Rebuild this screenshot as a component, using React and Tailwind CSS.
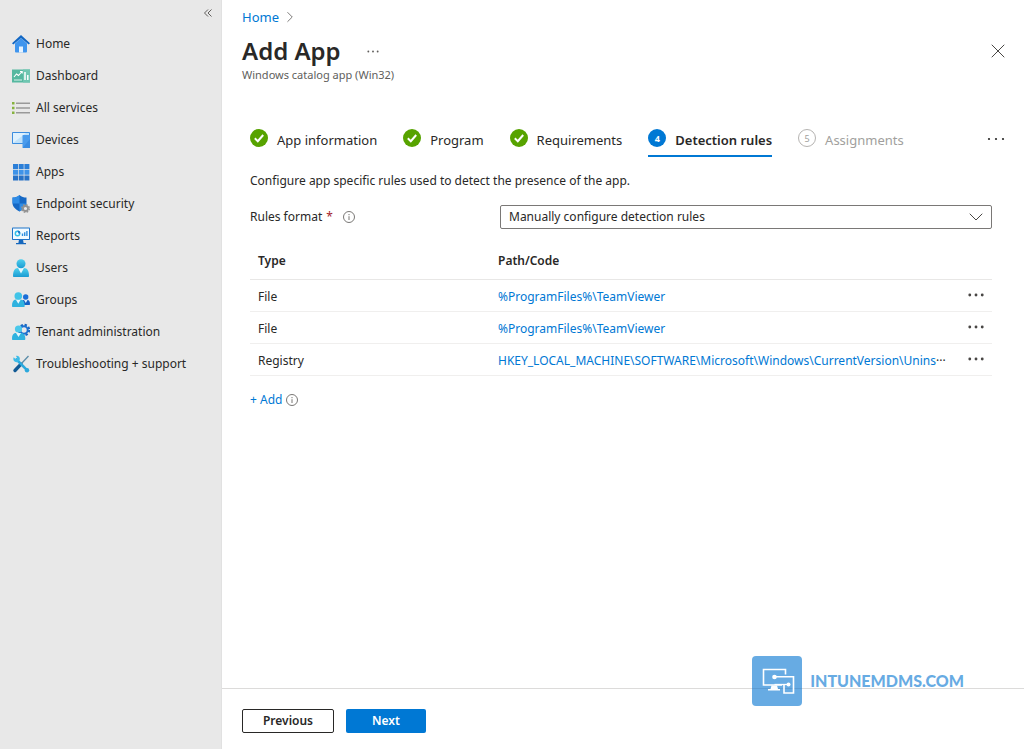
import React, { useState } from 'react';
import { ChevronDown, ChevronRight, X } from 'lucide-react';

const HomeIcon = () => (
  <svg viewBox="0 0 18 18" className="h-[18px] w-[18px]" aria-hidden="true">
    <path d="M3 8.500 9 3l6 5.500V16.500a1 1 0 0 1-1 1H4a1 1 0 0 1-1-1z" fill="#3f95ee" />
    <path d="M7 11.500h4v6H7z" fill="#e6f3ff" />
    <path d="M9 0 0 8.200l1.300 1.400L9 3l7.700 6.600L18 8.200z" fill="#1267c4" />
  </svg>
);

const DashboardIcon = () => (
  <svg viewBox="0 0 18 18" className="h-[18px] w-[18px]" aria-hidden="true">
    <rect x="0" y="2.500" width="18" height="13" fill="#56b8a0" />
    <rect x="11" y="2.500" width="7" height="13" fill="#6fc6b1" />
    <path d="M2 10l2.500-3 2 1.500L10 4.500M8 4.500h2.200v2" fill="none" stroke="#fff" strokeWidth="1.100" />
    <path d="M2 13h8" stroke="#d9f1eb" strokeWidth="1" />
    <path d="M13 5v8M15.800 8v5" stroke="#fff" strokeWidth="1.500" />
  </svg>
);

const ServicesIcon = () => (
  <svg viewBox="0 0 18 18" className="h-[18px] w-[18px]" aria-hidden="true">
    <path d="M0 3h2.500v2.500H0zM0 7.800h2.500v2.500H0zM0 12.500h2.500V15H0z" fill="#86b23f" />
    <path d="M4 4.300h14M4 9h14M4 13.800h14" stroke="#999" strokeWidth="1.500" />
  </svg>
);

const DevicesIcon = () => (
  <svg viewBox="0 0 18 18" className="h-[18px] w-[18px]" aria-hidden="true">
    <rect x="0" y="1" width="18" height="12" rx="0.800" fill="#3c8ddf" />
    <rect x="1" y="2" width="16" height="10" fill="#bfe1fa" />
    <path d="M1 12V2h13z" fill="#dff1fd" />
    <rect x="10.500" y="4" width="7.500" height="13" rx="0.800" fill="#4a9bec" />
    <path d="M10.500 17h7.500V8z" fill="#3a8ce2" />
  </svg>
);

const AppsIcon = () => (
  <svg viewBox="0 0 18 18" className="h-[18px] w-[18px]" aria-hidden="true">
    <path d="M1 1h5v5H1zM6.700 1h5v5h-5zM12.400 1h5v5h-5z" fill="#2b7fd8" />
    <path d="M1 6.700h5v5H1zM6.700 6.700h5v5h-5zM12.400 6.700h5v5h-5z" fill="#3f93e8" />
    <path d="M1 12.400h5v5H1zM6.700 12.400h5v5h-5zM12.400 12.400h5v5h-5z" fill="#2872c6" />
  </svg>
);

const SecurityIcon = () => (
  <svg viewBox="0 0 18 18" className="h-[18px] w-[18px]" aria-hidden="true">
    <path d="M7.500 0C9.500 2 12 2.500 14.500 2.600V8c0 4-3.500 6.500-7 8.500C4 14.500.5 12 .5 8V2.600C3 2.500 5.500 2 7.500 0z" fill="#1668c4" />
    <path d="M7.500 0v8.500H.5V2.600C3 2.500 5.500 2 7.500 0zM7.500 8.500h7c-.4 3.600-3.700 6.100-7 8z" fill="#2f8ce6" />
    <circle cx="13.500" cy="13.500" r="3.800" fill="none" stroke="#929292" strokeWidth="1.400" strokeDasharray="1.700 1.284" />
    <circle cx="13.500" cy="13.500" r="2.500" fill="#e8e8e8" stroke="#929292" strokeWidth="1.800" />
  </svg>
);

const ReportsIcon = () => (
  <svg viewBox="0 0 18 18" className="h-[18px] w-[18px]" aria-hidden="true">
    <path d="M7 12.500h4l.6 3.500H14v1.200H4V16h2.400z" fill="#1567bd" />
    <rect x="0" y="0.500" width="18" height="12.500" rx="0.800" fill="#1f74c8" />
    <rect x="1" y="1.500" width="16" height="10.500" fill="#f2faff" />
    <circle cx="5.500" cy="6.500" r="2.200" fill="none" stroke="#35c1e8" strokeWidth="1.400" />
    <path d="M5.500 3.600a2.900 2.900 0 0 1 2.900 2.900H6.500z" fill="#1f74c8" />
    <path d="M10.500 9V6.500M12.700 9V5.200M14.900 9V4" stroke="#2f8fdf" strokeWidth="1.400" />
  </svg>
);

const UsersIcon = () => (
  <svg viewBox="0 0 18 18" className="h-[18px] w-[18px]" aria-hidden="true">
    <defs>
      <linearGradient id="userFill" x1="0" y1="0" x2="0" y2="1">
        <stop offset="0" stopColor="#4fd0ee" />
        <stop offset="1" stopColor="#1a9bd2" />
      </linearGradient>
    </defs>
    <path d="M1 17c0-4.500 1.500-8 5-8h6c3.500 0 5 3.500 5 8 0 .6-.4 1-1 1H2c-.6 0-1-.4-1-1z" fill="url(#userFill)" />
    <path d="M6 9h6l-3 5.500z" fill="#e6f8fd" />
    <circle cx="9" cy="4.700" r="4.500" fill="url(#userFill)" />
  </svg>
);

const GroupsIcon = () => (
  <svg viewBox="0 0 18 18" className="h-[18px] w-[18px]" aria-hidden="true">
    <path d="M9 14c0-3 1-5 3-5h3.500c1.800 0 2.500 2 2.500 4 0 .6-.4 1-1 1z" fill="#1460c4" />
    <path d="M12 9h3.500l-1.700 3z" fill="#e0eefc" />
    <circle cx="13.700" cy="6" r="2.700" fill="#1a6ed8" />
    <path d="M0 15c0-3.500 1-6.500 4-6.500h4.500c3 0 4.200 3 4.200 6.500 0 .6-.4 1-1 1H1c-.6 0-1-.4-1-1z" fill="#2fb2df" />
    <path d="M3.800 8.500h5l-2.500 4.300z" fill="#e6f8fd" />
    <circle cx="6.300" cy="5" r="3.800" fill="#41c4e8" />
  </svg>
);

const TenantIcon = () => (
  <svg viewBox="0 0 18 18" className="h-[18px] w-[18px]" aria-hidden="true">
    <circle cx="12" cy="7" r="5.200" fill="none" stroke="#1766c0" strokeWidth="2" strokeDasharray="2.300 1.784" />
    <circle cx="12" cy="7" r="3.700" fill="#e8e8e8" stroke="#1b6fd0" strokeWidth="2" />
    <path d="M0 16c0-3.500 1-6 4-6h5c3 0 4.300 2.500 4.300 6 0 .6-.4 1-1 1H1c-.6 0-1-.4-1-1z" fill="#2fb2df" />
    <path d="M4 10h5l-2.500 4z" fill="#e6f8fd" />
    <circle cx="6.500" cy="6" r="3.600" fill="#4bc8ea" />
  </svg>
);

const SupportIcon = () => (
  <svg viewBox="0 0 18 18" className="h-[18px] w-[18px]" aria-hidden="true">
    <path d="M16.500 1 9 9" stroke="#5a8ca8" strokeWidth="1.300" />
    <path d="M9 9.200 3 15.500" stroke="#125a94" strokeWidth="3.400" strokeLinecap="round" />
    <path d="M4.500 4.500 15 15.200" stroke="#2ba8dc" strokeWidth="2.600" strokeLinecap="round" />
    <path d="M1.700 2.200 4 4.500l1.300-1L4 .9c2-.6 4 .9 3.900 3.100C7.700 6.500 5 8 3 6.800 1.500 5.900.9 4 1.700 2.200z" fill="#3cbce8" />
    <circle cx="15" cy="15.300" r="2.200" fill="#2ba8dc" />
  </svg>
);

const navItems = [
  { label: 'Home', icon: HomeIcon },
  { label: 'Dashboard', icon: DashboardIcon },
  { label: 'All services', icon: ServicesIcon },
  { label: 'Devices', icon: DevicesIcon },
  { label: 'Apps', icon: AppsIcon },
  { label: 'Endpoint security', icon: SecurityIcon },
  { label: 'Reports', icon: ReportsIcon },
  { label: 'Users', icon: UsersIcon },
  { label: 'Groups', icon: GroupsIcon },
  { label: 'Tenant administration', icon: TenantIcon },
  { label: 'Troubleshooting + support', icon: SupportIcon },
];

const steps = [
  { number: 1, label: 'App information', state: 'done' },
  { number: 2, label: 'Program', state: 'done' },
  { number: 3, label: 'Requirements', state: 'done' },
  { number: 4, label: 'Detection rules', state: 'current' },
  { number: 5, label: 'Assignments', state: 'todo' },
];

const rules = [
  { id: 1, type: 'File', path: '%ProgramFiles%\\TeamViewer' },
  { id: 2, type: 'File', path: '%ProgramFiles%\\TeamViewer' },
  {
    id: 3,
    type: 'Registry',
    path: 'HKEY_LOCAL_MACHINE\\SOFTWARE\\Microsoft\\Windows\\CurrentVersion\\Unins',
    cut: true,
  },
];

const Dots = ({ className, r = 1.6 }) => (
  <svg viewBox="0 0 18 4" className={className} fill="currentColor" aria-hidden="true">
    <circle cx="2" cy="2" r={r} />
    <circle cx="9" cy="2" r={r} />
    <circle cx="16" cy="2" r={r} />
  </svg>
);

const InfoIcon = () => (
  <svg viewBox="0 0 12 12" className="h-3 w-3 text-[#797775]" fill="none" stroke="currentColor" aria-hidden="true">
    <circle cx="6" cy="6" r="5.500" />
    <path d="M6 5.200V9M6 3v1.200" />
  </svg>
);

const StepBadge = ({ step }) => {
  if (step.state === 'done') {
    return (
      <svg viewBox="0 0 18 18" className="h-[18px] w-[18px]" aria-hidden="true">
        <circle cx="9" cy="9" r="9" fill="#57a300" />
        <path d="M4.800 9.300 7.800 12.200 13.200 6" fill="none" stroke="#fff" strokeWidth="2" />
      </svg>
    );
  }
  if (step.state === 'current') {
    return (
      <span className="flex h-[18px] w-[18px] items-center justify-center rounded-full bg-[#0078d4] text-[9px] leading-none font-bold text-white">
        {step.number}
      </span>
    );
  }
  return (
    <span className="flex h-[18px] w-[18px] items-center justify-center rounded-full border border-[#b5b3b1] text-[9px] leading-none text-[#a19f9d]">
      {step.number}
    </span>
  );
};

const Sidebar = () => (
  <aside className="w-[222px] shrink-0 border-r border-[#e1e1e1] bg-[#e8e8e8]">
    <div className="flex h-7 justify-end pr-[7px]">
      <button type="button" aria-label="Collapse menu" className="flex h-[26px] w-3 items-center justify-center text-[#605e5c]">
        <svg viewBox="0 0 8 8" className="h-2 w-2" fill="none" stroke="currentColor" aria-hidden="true">
          <path d="M4 .5.5 4 4 7.500M7.500.5 4 4l3.500 3.500" />
        </svg>
      </button>
    </div>
    <nav>
      <ul>
        {navItems.map(({ label, icon: Icon }) => (
          <li key={label}>
            <a href="#" className="flex h-8 items-center gap-[6px] pl-3">
              <Icon />
              <span>{label}</span>
            </a>
          </li>
        ))}
      </ul>
    </nav>
  </aside>
);

const Watermark = () => (
  <div className="pointer-events-none absolute right-[60px] bottom-[43px] flex items-center gap-2">
    <svg viewBox="0 0 50 50" className="h-[50px] w-[50px]" aria-hidden="true">
      <rect width="50" height="50" rx="4" fill="#67abe3" />
      <path d="M0 32.500h50" stroke="#5b9bd2" />
      <g fill="none" stroke="#fff" strokeWidth="1.600">
        <path d="M33.500 18.500v-5H11.500V29h18.500" />
        <path d="M23 20.800h18.500V37H32V28.500" />
        <path d="M22.500 28.500H36" strokeWidth="1.300" />
      </g>
      <path d="M19.500 29.500h5.500l1 3.500h2v1.500H16V33h2.500z" fill="#fff" />
      <circle cx="22.500" cy="21" r="2.300" fill="#fff" />
      <circle cx="36.500" cy="28.500" r="2" fill="#fff" />
    </svg>
    <span className="font-['Lato'] text-[16px] leading-6 font-black text-[#67abe3]">INTUNEMDMS.COM</span>
  </div>
);

const App = () => {
  const [format, setFormat] = useState('manual');

  return (
    <div className="relative flex min-h-screen bg-white font-['Noto_Sans','Segoe_UI',sans-serif] text-[12px] leading-5 text-[#292827]">
      <Sidebar />

      <div className="flex min-w-0 flex-1 flex-col">
        <header className="pt-[7px] pr-[14px] pl-5">
          <nav aria-label="Breadcrumb" className="flex items-center gap-[2px] text-[13px]">
            <a href="#" className="text-[#0078d4]">Home</a>
            <ChevronRight className="h-[18px] w-[18px] text-[#797775]" strokeWidth={1.3} />
          </nav>
          <div className="mt-2 flex h-8 items-center">
            <h1 className="text-[24px] leading-8 font-semibold">Add App</h1>
            <button type="button" aria-label="More commands" className="ml-6 flex h-6 w-4 items-center justify-center text-[#605e5c]">
              <Dots className="h-[3px] w-3" r={1.4} />
            </button>
            <button type="button" aria-label="Close" className="ml-auto flex h-6 w-6 items-center justify-center text-[#484644]">
              <X className="h-6 w-6" strokeWidth={1} />
            </button>
          </div>
          <p className="text-[11px] leading-4 text-[#605e5c]">Windows catalog app (Win32)</p>
        </header>

        <main className="pt-[42px] pr-8 pl-7">
          <div className="-mr-[14px] flex items-start">
            <ol className="flex items-start gap-[26px]">
              {steps.map((step) => (
                <li key={step.number}>
                  <button
                    type="button"
                    className={
                      step.state === 'current'
                        ? 'flex h-8 items-start gap-[9px] border-b-2 border-[#0078d4] pt-1 text-[13px] font-semibold whitespace-nowrap'
                        : step.state === 'todo'
                          ? 'flex h-8 items-start gap-[9px] pt-1 text-[13px] whitespace-nowrap text-[#a19f9d]'
                          : 'flex h-8 items-start gap-[9px] pt-1 text-[13px] whitespace-nowrap'
                    }
                  >
                    <StepBadge step={step} />
                    <span className="leading-[22px]">{step.label}</span>
                  </button>
                </li>
              ))}
            </ol>
            <button type="button" aria-label="More steps" className="ml-auto flex h-7 w-5 items-center justify-center">
              <Dots className="h-1 w-[18px]" r={1.1} />
            </button>
          </div>

          <p className="mt-[14px]">Configure app specific rules used to detect the presence of the app.</p>

          <div className="mt-[14px] flex h-6 items-center">
            <label htmlFor="rules-format" className="flex w-[250px] shrink-0 items-center">
              Rules format
              <span className="ml-1 text-[#a4262c]">*</span>
              <span className="ml-[10px]"><InfoIcon /></span>
            </label>
            <div className="relative flex-1">
              <select
                id="rules-format"
                value={format}
                onChange={(e) => setFormat(e.target.value)}
                className="block h-6 w-full appearance-none rounded-xs border border-[#7a7876] bg-white px-2"
              >
                <option value="manual">Manually configure detection rules</option>
                <option value="script">Use a custom detection script</option>
              </select>
              <ChevronDown className="pointer-events-none absolute top-0 right-1 h-6 w-6 text-[#484644]" strokeWidth={1} />
            </div>
          </div>

          <table className="mt-[14px] w-full table-fixed text-left">
            <thead>
              <tr className="h-9 border-b border-[#e8e7e6]">
                <th className="w-60 pl-2 font-semibold">Type</th>
                <th className="pl-2 font-semibold">Path/Code</th>
                <th className="w-8" aria-label="Actions"></th>
              </tr>
            </thead>
            <tbody>
              {rules.map((rule) => (
                <tr key={rule.id} className="h-8 border-b border-[#f0efee]">
                  <td className="pt-1 pl-2">{rule.type}</td>
                  <td className="truncate pt-1 pl-2">
                    <a href="#" className="text-[#0078d4]">{rule.path}</a>
                    {rule.cut && <span>···</span>}
                  </td>
                  <td>
                    <button type="button" aria-label="Rule options" className="ml-2 flex h-5 w-4 items-center justify-center text-[#484644]">
                      <Dots className="h-1 w-4" />
                    </button>
                  </td>
                </tr>
              ))}
            </tbody>
          </table>

          <div className="mt-[14px] flex items-center gap-1">
            <button type="button" className="text-[#0078d4]">+ Add</button>
            <InfoIcon />
          </div>
        </main>

        <footer className="mt-auto flex gap-3 border-t border-[#dcdbda] px-5 pt-5 pb-4">
          <button type="button" className="h-6 w-[92px] rounded-xs border border-[#292827] bg-white font-semibold">
            Previous
          </button>
          <button type="button" className="h-6 w-20 rounded-xs bg-[#0078d4] font-semibold text-white">
            Next
          </button>
        </footer>
      </div>

      <Watermark />
    </div>
  );
};

export default App;
